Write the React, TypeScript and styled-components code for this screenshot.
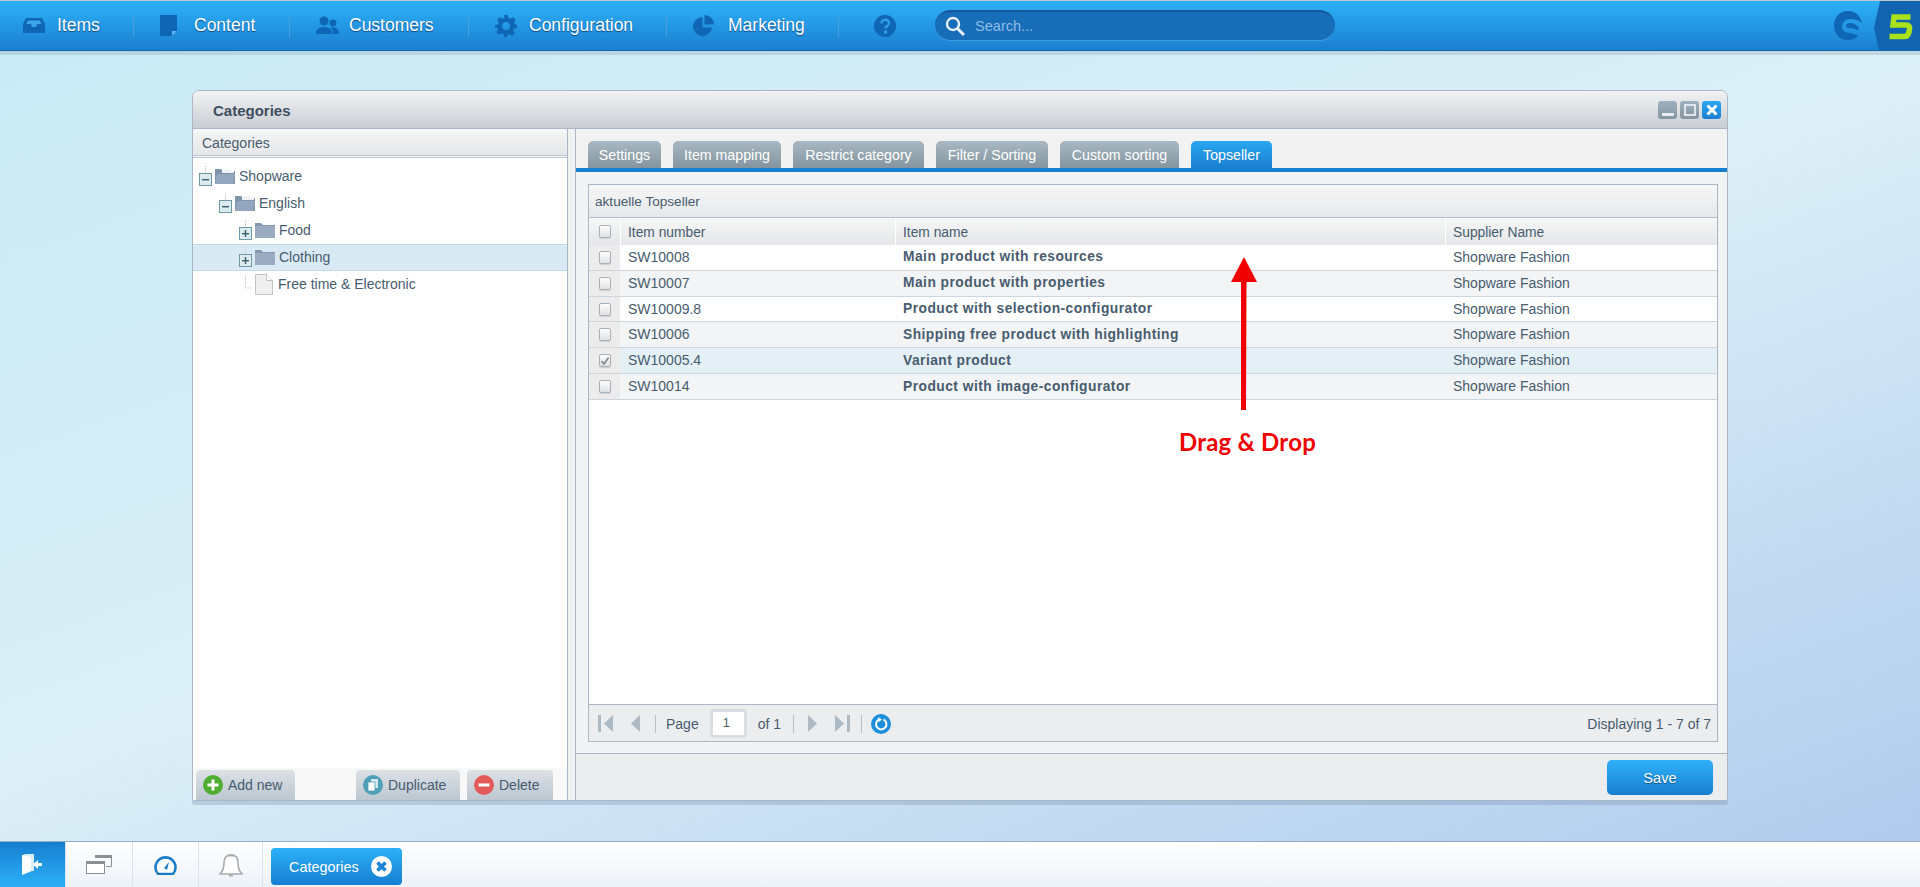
import React from "react";
import styled, { createGlobalStyle } from "styled-components";

const Global = createGlobalStyle`
  html, body { margin: 0; padding: 0; height: 100%; overflow: hidden; }
  body { font-family: "Liberation Sans", Arial, sans-serif; color: #475c6f; font-size: 14px; }
  * { box-sizing: border-box; }
`;

const Page = styled.div`
  width: 1920px;
  height: 887px;
  display: flex;
  flex-direction: column;
  background: linear-gradient(160deg, #c8ebf5 0%, #dceff7 50%, #adc9ec 100%);
`;

/* top bar */
const TopBar = styled.header`
  flex: none;
  height: 51px;
  display: flex;
  align-items: center;
  border-top: 1px solid #b9c6cf;
  border-bottom: 1px solid #0f69b5;
  background: linear-gradient(#2db1f8, #1a7fd0);
  box-shadow: 0 4px 0 rgba(80, 110, 130, 0.18);
`;

const NavItem = styled.div<{ $w: number; $gap: number; $first?: boolean }>`
  width: ${(p) => p.$w}px;
  height: 22px;
  display: flex;
  align-items: center;
  gap: ${(p) => p.$gap}px;
  padding-left: ${(p) => (p.$first ? "23px" : "26px")};
  border-right: 1px solid #4a9fdc;
  color: #fff;
  font-size: 17.5px;
  text-shadow: 0 1px 1px rgba(0, 40, 90, 0.7);
`;

const HelpSlot = styled.div`
  display: flex;
  margin-left: 35px;
`;

const SearchBox = styled.div`
  width: 400px;
  height: 31px;
  margin-left: 39px;
  display: flex;
  align-items: center;
  gap: 10px;
  padding-left: 10px;
  border-radius: 16px;
  background: #186db8;
  border-top: 2px solid #14589a;
  border-bottom: 1px solid #3f9ee0;
  color: #8dbde6;
  font-size: 14.6px;
`;

const BrandArea = styled.div`
  margin-left: auto;
  height: 49px;
  display: flex;
  align-items: center;
  gap: 12px;
`;

/* workspace + window */
const Workspace = styled.main`
  flex: 1;
  min-height: 0;
  padding: 39px 0 0 192px;
`;

const Win = styled.section`
  width: 1536px;
  height: 711px;
  display: flex;
  flex-direction: column;
  border: 1px solid #a9b7c6;
  border-radius: 7px 7px 3px 3px;
  background: #eff1f3;
  box-shadow: 0 4px 0 rgba(120, 150, 180, 0.35);
  overflow: hidden;
`;

const TitleBar = styled.div`
  flex: none;
  height: 38px;
  display: flex;
  align-items: center;
  justify-content: space-between;
  padding: 0 6px 0 20px;
  border-bottom: 1px solid #a9b7c6;
  background: linear-gradient(#f2f2f2, #c9ced4);
  font-weight: bold;
  font-size: 15px;
  color: #3e4f5f;
`;

const TitleText = styled.span`
  padding-top: 1px;
`;

const WinControls = styled.div`
  display: flex;
  gap: 3px;
`;

const WinBtn = styled.div<{ $active?: boolean }>`
  width: 19px;
  height: 18px;
  border-radius: 3px;
  display: flex;
  align-items: center;
  justify-content: center;
  background: ${(p) =>
    p.$active ? "linear-gradient(#2aa8f2, #1a7fd0)" : "linear-gradient(#9fb0c0, #84959f)"};
`;

const WinBody = styled.div`
  flex: 1;
  min-height: 0;
  display: flex;
`;

const LeftPanel = styled.aside`
  flex: none;
  width: 375px;
  display: flex;
  flex-direction: column;
  background: #fff;
  border-right: 1px solid #a9b7c6;
`;

const PanelHead = styled.div`
  flex: none;
  height: 29px;
  display: flex;
  align-items: center;
  padding: 1px 0 0 9px;
  background: linear-gradient(#f6f6f6, #e4e6e9);
  border-bottom: 3px double #b8c4ce;
  font-size: 14px;
`;

const Tree = styled.div`
  flex: 1;
  padding-top: 5px;
`;

const TreeRow = styled.div<{ $depth: number; $selected?: boolean }>`
  height: 27px;
  display: flex;
  align-items: center;
  gap: 3px;
  padding-left: ${(p) => 6 + p.$depth * 20}px;
  font-size: 14px;
  background: ${(p) => (p.$selected ? "#d9eaf5" : "transparent")};
  border-top: 1px solid ${(p) => (p.$selected ? "#c5d9e8" : "transparent")};
  border-bottom: 1px solid ${(p) => (p.$selected ? "#c5d9e8" : "transparent")};
`;

const TreeLabel = styled.span`
  margin-left: 1px;
  transform: translateY(-1px);
`;

const ToggleSvg = styled.svg`
  transform: translateY(-1px);
`;

const LeftFoot = styled.div`
  flex: none;
  height: 32px;
  display: flex;
  gap: 7px;
  padding: 2px 0 0 3px;
  background: #f8f8f8;
`;

const GrayBtn = styled.div<{ $push?: boolean; $w: number }>`
  width: ${(p) => p.$w}px;
  height: 30px;
  margin-left: ${(p) => (p.$push ? "54px" : "0")};
  display: flex;
  align-items: center;
  gap: 5px;
  padding-left: 7px;
  border-radius: 4px 4px 0 0;
  background: linear-gradient(#dce1e6, #bcc7d1);
  font-size: 14px;
`;

const RightPanel = styled.div`
  flex: 1;
  min-width: 0;
  margin-left: 7px;
  display: flex;
  flex-direction: column;
  border-left: 1px solid #a9b7c6;
`;

const Tabs = styled.div`
  flex: none;
  height: 43px;
  display: flex;
  align-items: flex-end;
  gap: 12px;
  padding-left: 12px;
  border-bottom: 4px solid #177fd0;
  background: #f2f2f3;
`;

const Tab = styled.div<{ $w: number; $active?: boolean }>`
  width: ${(p) => p.$w}px;
  height: 27px;
  display: flex;
  align-items: center;
  justify-content: center;
  border-radius: 5px 5px 0 0;
  color: #fff;
  font-size: 14.2px;
  background: ${(p) =>
    p.$active ? "linear-gradient(#2aa8f2, #1a7fd0)" : "linear-gradient(#a9b8c3, #84959f)"};
`;

const TabBody = styled.div`
  flex: 1;
  min-height: 0;
  display: flex;
  padding: 12px 9px 11px 12px;
  background: #f1f3f5;
  border-bottom: 1px solid #a9b7c6;
`;

const Grid = styled.div`
  flex: 1;
  display: flex;
  flex-direction: column;
  border: 1px solid #a9b7c6;
  background: #fff;
`;

const GridTitle = styled.div`
  flex: none;
  height: 33px;
  display: flex;
  align-items: center;
  padding-left: 6px;
  background: linear-gradient(#f6f6f6, #e6e8ea);
  border-bottom: 1px solid #b4c0cb;
  font-size: 13.6px;
`;

const Columns = "31px 275px 550px 1fr";

const HeadRow = styled.div`
  flex: none;
  height: 27px;
  display: grid;
  grid-template-columns: ${Columns};
  background: linear-gradient(#f7f7f7, #e4e6e9);
`;

const HeadCell = styled.div`
  display: flex;
  align-items: center;
  padding: 1px 0 0 7px;
  border-left: 1px solid #fff;
  font-size: 13.8px;
`;

const CheckCell = styled.div<{ $row?: boolean }>`
  display: flex;
  align-items: center;
  justify-content: center;
  background: ${(p) => (p.$row ? "#ececec" : "transparent")};
`;

const GridBody = styled.div`
  position: relative;
  flex: 1;
  min-height: 0;
`;

const Row = styled.div<{ $tone: "white" | "alt" | "sel" }>`
  height: 25.83px;
  display: grid;
  grid-template-columns: ${Columns};
  align-items: stretch;
  border-bottom: 1px solid #cbd6e0;
  background: ${(p) => (p.$tone === "white" ? "#fff" : p.$tone === "alt" ? "#f3f4f6" : "#e4eff6")};
`;

const Cell = styled.div<{ $bold?: boolean }>`
  display: flex;
  align-items: center;
  padding: 0 0 1px 8px;
  font-weight: ${(p) => (p.$bold ? "bold" : "normal")};
  letter-spacing: ${(p) => (p.$bold ? "0.47px" : "0")};
  font-size: ${(p) => (p.$bold ? "13.8px" : "14px")};
`;

const Box = styled.div`
  width: 12px;
  height: 13px;
  border: 1px solid #a9b0b7;
  border-radius: 2px;
  background: linear-gradient(#fdfdfd, #dfe1e4);
  display: flex;
  align-items: center;
  justify-content: center;
  box-shadow: 0 1px 1px rgba(0, 0, 0, 0.12);
`;

const Annotation = styled.div`
  position: absolute;
  left: 590px;
  top: 183px;
  color: #f00000;
  font-family: Lato, "Open Sans", sans-serif;
  font-weight: 700;
  font-size: 24px;
  letter-spacing: 0.2px;
  line-height: 28px;
  white-space: nowrap;
`;

const ArrowWrap = styled.svg`
  position: absolute;
  left: 641px;
  top: 12px;
`;

const Pager = styled.div`
  flex: none;
  height: 37px;
  display: flex;
  align-items: center;
  padding: 1px 6px 0 9px;
  background: #ebedef;
  border-top: 1px solid #a9b7c6;
  font-size: 14px;
`;

const PagerIconSvg = styled.svg<{ $flip: boolean }>`
  transform: ${(p) => (p.$flip ? "scaleX(-1)" : "none")};
`;

const PagerGap = styled.span`
  width: 18px;
`;

const PagerSep = styled.span<{ $l: number; $r: number }>`
  width: 1px;
  height: 18px;
  margin: 0 ${(p) => p.$r}px 0 ${(p) => p.$l}px;
  background: #b5bec7;
`;

const PageInput = styled.div`
  width: 37px;
  height: 29px;
  margin: 0 11px 0 11px;
  padding: 4px 0 0 10px;
  border: 3px solid #d9dee3;
  border-radius: 4px;
  background: #fff;
  font-size: 12.6px;
`;

const PagerInfo = styled.span`
  margin-left: auto;
`;

const WinFoot = styled.div`
  flex: none;
  height: 46px;
  display: flex;
  justify-content: flex-end;
  align-items: flex-start;
  padding: 6px 14px 0 0;
  background: #ebedef;
`;

const SaveBtn = styled.div`
  width: 106px;
  height: 35px;
  display: flex;
  align-items: center;
  justify-content: center;
  border-radius: 5px;
  color: #fff;
  font-size: 14.6px;
  text-shadow: 0 1px 1px rgba(0, 40, 90, 0.6);
  background: linear-gradient(#2fb0f8, #177ed0);
`;

/* dock */
const Dock = styled.footer`
  flex: none;
  height: 46px;
  display: flex;
  align-items: stretch;
  border-top: 1px solid #93aec6;
  background: linear-gradient(#ffffff, #edf2f9);
`;

const DoorSlot = styled.div`
  width: 65px;
  display: flex;
  align-items: center;
  justify-content: center;
  background: linear-gradient(#177ed0, #2cb0f8);
`;

const DockSlot = styled.div<{ $w: number }>`
  width: ${(p) => p.$w}px;
  display: flex;
  align-items: center;
  justify-content: center;
  border-left: 1px solid #dbe4ee;
  border-right: ${(p) => (p.$w === 65 ? "1px solid #dbe4ee" : "0")};
`;

const DockTask = styled.div`
  width: 131px;
  height: 37px;
  margin: 6px 0 0 8px;
  display: flex;
  align-items: center;
  justify-content: space-between;
  padding: 0 10px 0 18px;
  border-radius: 4px;
  color: #fff;
  font-size: 14.4px;
  background: linear-gradient(#2cb0f8, #177ed0);
`;

/* drawings */
const ItemsIcon = () => (
  <svg width="22" height="15" viewBox="0 0 22 15">
    <path d="M3 0h16l3 6v9H0V6z" fill="#0f66b4" />
    <path d="M3.500 6h4.500l1 3h4l1-3h4.500l-1.500-3.500H5z" fill="#3ba6ea" />
  </svg>
);
const ContentIcon = () => (
  <svg width="17" height="21" viewBox="0 0 17 21">
    <path d="M0 0h17v16l-5 5H0z" fill="#0f66b4" />
    <path d="M12 21v-5h5z" fill="#5db4ee" />
  </svg>
);
const CustomersIcon = () => (
  <svg width="23" height="19" viewBox="0 0 23 19">
    <circle cx="8" cy="5" r="4.500" fill="#0f66b4" />
    <path d="M0 18c0-5 3-7 8-7s8 2 8 7z" fill="#0f66b4" />
    <circle cx="17" cy="7" r="3.400" fill="#0f66b4" />
    <path d="M15 11.500c5-1 8 2 8 6.500h-6c0-3-1-5-2-6.500z" fill="#0f66b4" />
  </svg>
);
const GearIcon = () => (
  <svg width="22" height="22" viewBox="0 0 24 24">
    <path
      fill="#0f66b4"
      fillRule="evenodd"
      d="M10 0h4l.7 3.300 2.200.9 2.900-1.800 2.800 2.800-1.800 2.900.9 2.200L24 11v3l-3.300.7-.9 2.200 1.800 2.900-2.800 2.800-2.900-1.800-2.200.9L13 24h-3l-.7-3.300-2.200-.9-2.900 1.800-2.800-2.800 1.800-2.900-.9-2.200L0 14v-3l3.300-.7.9-2.200-1.800-2.900 2.800-2.800 2.900 1.800 2.200-.9zM12 7.500a4.500 4.500 0 1 0 0 9 4.500 4.500 0 0 0 0-9z"
    />
  </svg>
);
const PieIcon = () => (
  <svg width="21" height="22" viewBox="0 0 21 22">
    <path d="M9.500 2a9.500 9.500 0 1 0 9.500 10.500H9.500z" fill="#0f66b4" />
    <path d="M11.500 0a9.500 9.500 0 0 1 9.500 9.500h-9.500z" fill="#0f66b4" />
  </svg>
);
const HelpIcon = () => (
  <svg width="22" height="22" viewBox="0 0 22 22">
    <circle cx="11" cy="11" r="11" fill="#0f66b4" />
    <path d="M7.500 8.500c0-5 7.500-5 7.500-.5 0 3-3.500 3-3.500 5.500" fill="none" stroke="#2f9fe8" strokeWidth="2.400" />
    <rect x="10" y="15.500" width="3" height="3" fill="#2f9fe8" />
  </svg>
);
const SearchIcon = () => (
  <svg width="20" height="20" viewBox="0 0 20 20">
    <circle cx="8" cy="8" r="6" fill="none" stroke="#e6f1fa" strokeWidth="2.400" />
    <path d="M12.500 12.500L19 19" stroke="#e6f1fa" strokeWidth="3" />
  </svg>
);
const ShopLogo = () => (
  <svg width="28" height="29" viewBox="0 0 28 29">
    <path
      fill="#0f66b4"
      d="M24 4C21 1 18 0 14 0 6 0 0 6 0 14.500S6 29 14 29c4 0 8-1.500 10-4-3-2-6-2.500-9-3-4-.6-7-2-7-6 0-5 4-8 9-8 3 0 6 1 8 2 2 1 3 2 3 3 0-3-2-6-4-9zM16 12c-2 0-4 1-4 3 0 1.500 2 2 4 2.200 3 .3 6 .8 8 2 1.500-1.500 1-3-1-4.500-2-1.500-4.500-2.700-7-2.700z"
    />
  </svg>
);
const VersionFlag = () => (
  <svg width="46" height="49" viewBox="0 0 46 49">
    <path d="M6 0h40v49H5L0 27z" fill="#1064b0" />
    <path
      d="M36.500 16H20l-1 8h13c3 0 4 2 3.500 4l-.5 3c-.5 3-2 4.500-5 4.500H15.500"
      fill="none"
      stroke="#a9e21a"
      strokeWidth="5.500"
    />
  </svg>
);
const FolderIcon = ({ open }: { open?: boolean }) => (
  <svg width="20" height="15" viewBox="0 0 20 15">
    <path d="M0 0h6l2 2h12v13H0z" fill={open ? "#7f93ab" : "#8497b0"} />
    {open && <path d="M7 1l7-1 2 2h3v2H7z" fill="#eef1f5" />}
    {open && <path d="M2 5h18l-2 10H0z" fill="#94a6bd" />}
    {!open && <rect x="0" y="3" width="20" height="12" fill="#9aabc2" />}
  </svg>
);
const Toggle = ({ plus }: { plus?: boolean }) => (
  <ToggleSvg width="13" height="20" viewBox="0 0 13 20">
    <path d="M6.500 0v7" stroke="#c4c4c4" strokeDasharray="1 1" />
    <rect x="0.500" y="7.500" width="12" height="12" fill="#dcecee" stroke="#6f9aa5" />
    <rect x="3" y="13" width="7" height="1.400" fill="#39606c" />
    {plus && <rect x="5.800" y="10" width="1.400" height="7" fill="#39606c" />}
  </ToggleSvg>
);
const Elbow = () => (
  <svg width="13" height="20" viewBox="0 0 13 20">
    <path d="M6.500 0v13H13" fill="none" stroke="#c4c4c4" strokeDasharray="1 1" />
  </svg>
);
const FileIcon = () => (
  <svg width="19" height="21" viewBox="0 0 19 21">
    <path d="M.5.500h11l6 6v14H.5z" fill="#efefef" stroke="#c4c4c4" />
    <path d="M11.500.500v6h6" fill="#fff" stroke="#c4c4c4" />
  </svg>
);
const RoundIcon = ({ color, kind }: { color: string; kind: "plus" | "minus" | "copy" }) => (
  <svg width="20" height="20" viewBox="0 0 20 20">
    <circle cx="10" cy="10" r="10" fill={color} />
    {kind !== "copy" && <rect x="4.500" y="8.500" width="11" height="3" fill="#fff" />}
    {kind === "plus" && <rect x="8.500" y="4.500" width="3" height="11" fill="#fff" />}
    {kind === "copy" && <rect x="8" y="4" width="7" height="9" fill="#d6e9f0" />}
    {kind === "copy" && <rect x="5" y="7" width="7" height="9" fill="#fff" stroke={color} strokeWidth="0.800" />}
  </svg>
);
const PagerIcon = ({ kind }: { kind: "first" | "prev" | "next" | "last" }) => {
  const edge = kind === "first" || kind === "last";
  return (
    <PagerIconSvg
      $flip={kind === "next" || kind === "last"}
      width={edge ? 15 : 9}
      height="17"
      viewBox={edge ? "0 0 15 17" : "0 0 9 17"}
    >
      {edge && <rect x="0" y="0" width="3" height="17" fill="#adb9c3" />}
      <path d={edge ? "M15 0v17L6 8.500z" : "M9 0v17L0 8.500z"} fill="#adb9c3" />
    </PagerIconSvg>
  );
};
const RefreshIcon = () => (
  <svg width="20" height="20" viewBox="0 0 20 20">
    <circle cx="10" cy="10" r="10" fill="#1b8fdc" />
    <path d="M8 5.500a5.200 5.200 0 1 0 4.500 0" fill="none" stroke="#fff" strokeWidth="2" />
    <path d="M7 3l4 2.500L8 8z" fill="#fff" />
  </svg>
);
const DoorIcon = () => (
  <svg width="21" height="21" viewBox="0 0 21 21">
    <path d="M0 1h10v16l-10 4z" fill="#fff" />
    <path d="M0 1l4-1h8v17H9V3z" fill="#d8eefc" />
    <path d="M11 10.500L16 6v3h4v3h-4v3z" fill="#fff" />
  </svg>
);
const WindowsIcon = () => (
  <svg width="26" height="19" viewBox="0 0 26 19">
    <path d="M9 .5h16.500v11H20" fill="none" stroke="#8a8f94" />
    <rect x="9" y="0" width="17" height="3" fill="#8a8f94" />
    <rect x=".5" y="6.500" width="18" height="12" fill="#fff" stroke="#8a8f94" />
    <rect x="0" y="6" width="19" height="3" fill="#8a8f94" />
  </svg>
);
const GaugeIcon = () => (
  <svg width="23" height="20" viewBox="0 0 23 20">
    <path d="M4 19a10 10 0 1 1 15 0z" fill="#fff" stroke="#1a7cc8" strokeWidth="2.600" />
    <path d="M10 13l5-6-2 8z" fill="#1a7cc8" />
  </svg>
);
const BellIcon = () => (
  <svg width="24" height="24" viewBox="0 0 24 24">
    <path d="M12 2c-5 0-7 3-7 8 0 5-2 9-4 11h22c-2-2-4-6-4-11 0-5-2-8-7-8z" fill="#fff" stroke="#a6abb0" strokeWidth="1.600" />
    <path d="M9 2.500h6M10 22.500h4" stroke="#a6abb0" strokeWidth="1.800" />
  </svg>
);
const CloseRound = () => (
  <svg width="21" height="21" viewBox="0 0 21 21">
    <circle cx="10.500" cy="10.500" r="10.500" fill="#fff" />
    <path d="M6.500 6.500l8 8M14.500 6.500l-8 8" stroke="#1a85d6" strokeWidth="3.600" />
  </svg>
);

const rows: { no: string; name: string; tone: "white" | "alt" | "sel"; checked?: boolean }[] = [
  { no: "SW10008", name: "Main product with resources", tone: "white" },
  { no: "SW10007", name: "Main product with properties", tone: "alt" },
  { no: "SW10009.8", name: "Product with selection-configurator", tone: "white" },
  { no: "SW10006", name: "Shipping free product with highlighting", tone: "alt" },
  { no: "SW10005.4", name: "Variant product", tone: "sel", checked: true },
  { no: "SW10014", name: "Product with image-configurator", tone: "alt" },
];

const tabs = [
  { label: "Settings", w: 73 },
  { label: "Item mapping", w: 108 },
  { label: "Restrict category", w: 131 },
  { label: "Filter / Sorting", w: 112 },
  { label: "Custom sorting", w: 119 },
  { label: "Topseller", w: 81, active: true },
];

export default function App() {
  return (
    <Page>
      <Global />
      <TopBar>
        <NavItem $first $w={134} $gap={12}><ItemsIcon />Items</NavItem>
        <NavItem $w={156} $gap={17}><ContentIcon />Content</NavItem>
        <NavItem $w={179} $gap={10}><CustomersIcon />Customers</NavItem>
        <NavItem $w={198} $gap={12}><GearIcon />Configuration</NavItem>
        <NavItem $w={172} $gap={14}><PieIcon />Marketing</NavItem>
        <HelpSlot><HelpIcon /></HelpSlot>
        <SearchBox><SearchIcon />Search...</SearchBox>
        <BrandArea><ShopLogo /><VersionFlag /></BrandArea>
      </TopBar>
      <Workspace>
        <Win>
          <TitleBar>
            <TitleText>Categories</TitleText>
            <WinControls>
              <WinBtn>
                <svg width="12" height="12" viewBox="0 0 12 12"><rect y="9" width="12" height="3" fill="#e8edf1" /></svg>
              </WinBtn>
              <WinBtn>
                <svg width="12" height="12" viewBox="0 0 12 12"><rect x="1" y="1" width="10" height="10" fill="none" stroke="#dfe5ea" strokeWidth="2" /></svg>
              </WinBtn>
              <WinBtn $active>
                <svg width="12" height="12" viewBox="0 0 12 12"><path d="M1.500 1.500l9 9M10.500 1.500l-9 9" stroke="#fff" strokeWidth="3" /></svg>
              </WinBtn>
            </WinControls>
          </TitleBar>
          <WinBody>
            <LeftPanel>
              <PanelHead>Categories</PanelHead>
              <Tree>
                <TreeRow $depth={0}><Toggle /><FolderIcon open /><TreeLabel>Shopware</TreeLabel></TreeRow>
                <TreeRow $depth={1}><Toggle /><FolderIcon open /><TreeLabel>English</TreeLabel></TreeRow>
                <TreeRow $depth={2}><Toggle plus /><FolderIcon /><TreeLabel>Food</TreeLabel></TreeRow>
                <TreeRow $depth={2} $selected><Toggle plus /><FolderIcon /><TreeLabel>Clothing</TreeLabel></TreeRow>
                <TreeRow $depth={2}><Elbow /><FileIcon /><TreeLabel>Free time &amp; Electronic</TreeLabel></TreeRow>
              </Tree>
              <LeftFoot>
                <GrayBtn $w={99}><RoundIcon color="#4fae32" kind="plus" />Add new</GrayBtn>
                <GrayBtn $w={104} $push><RoundIcon color="#4f9fb8" kind="copy" />Duplicate</GrayBtn>
                <GrayBtn $w={86}><RoundIcon color="#e35a5a" kind="minus" />Delete</GrayBtn>
              </LeftFoot>
            </LeftPanel>
            <RightPanel>
              <Tabs>
                {tabs.map((t) => (
                  <Tab key={t.label} $w={t.w} $active={t.active}>{t.label}</Tab>
                ))}
              </Tabs>
              <TabBody>
                <Grid>
                  <GridTitle>aktuelle Topseller</GridTitle>
                  <HeadRow>
                    <CheckCell><Box /></CheckCell>
                    <HeadCell>Item number</HeadCell>
                    <HeadCell>Item name</HeadCell>
                    <HeadCell>Supplier Name</HeadCell>
                  </HeadRow>
                  <GridBody>
                    {rows.map((r) => (
                      <Row key={r.no} $tone={r.tone}>
                        <CheckCell $row>
                          <Box>
                            {r.checked && (
                              <svg width="10" height="10" viewBox="0 0 10 10"><path d="M1.500 5l2.500 3 4.500-6.500" fill="none" stroke="#7d858c" strokeWidth="1.600" /></svg>
                            )}
                          </Box>
                        </CheckCell>
                        <Cell>{r.no}</Cell>
                        <Cell $bold>{r.name}</Cell>
                        <Cell>Shopware Fashion</Cell>
                      </Row>
                    ))}
                    <ArrowWrap width="30" height="156" viewBox="0 0 30 156">
                      <path d="M14 0L27 25H1z" fill="#f00000" />
                      <path d="M11 24h5.500l-.5 129h-5z" fill="#f00000" />
                    </ArrowWrap>
                    <Annotation>Drag &amp; Drop</Annotation>
                  </GridBody>
                  <Pager>
                    <PagerIcon kind="first" />
                    <PagerGap />
                    <PagerIcon kind="prev" />
                    <PagerSep $l={15} $r={10} />
                    Page
                    <PageInput>1</PageInput>
                    of 1
                    <PagerSep $l={12} $r={14} />
                    <PagerIcon kind="next" />
                    <PagerGap />
                    <PagerIcon kind="last" />
                    <PagerSep $l={11} $r={9} />
                    <RefreshIcon />
                    <PagerInfo>Displaying 1 - 7 of 7</PagerInfo>
                  </Pager>
                </Grid>
              </TabBody>
              <WinFoot><SaveBtn>Save</SaveBtn></WinFoot>
            </RightPanel>
          </WinBody>
        </Win>
      </Workspace>
      <Dock>
        <DoorSlot><DoorIcon /></DoorSlot>
        <DockSlot $w={67}><WindowsIcon /></DockSlot>
        <DockSlot $w={66}><GaugeIcon /></DockSlot>
        <DockSlot $w={65}><BellIcon /></DockSlot>
        <DockTask>Categories<CloseRound /></DockTask>
      </Dock>
    </Page>
  );
}
